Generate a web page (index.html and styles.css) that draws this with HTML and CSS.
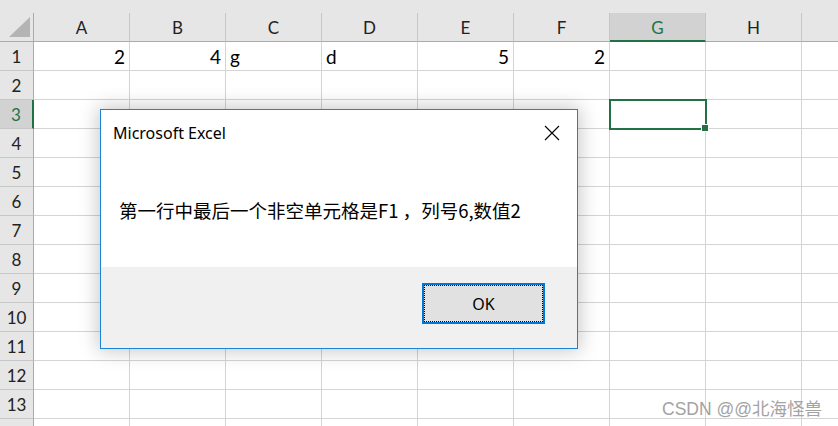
FILE: index.html
```html
<!DOCTYPE html>
<html lang="zh-CN">
<head>
<meta charset="utf-8">
<title>Excel</title>
<link rel="stylesheet" href="styles.css">
</head>
<body>
<div class="sheet">
  <div class="topstrip"></div>
  <div class="row hdr">
    <div class="corner"><svg width="34" height="28" viewBox="0 0 34 28"><polygon points="30,4 30,24 9,24" fill="#b4b4b4"/></svg></div>
    <div class="ch">A</div><div class="ch">B</div><div class="ch">C</div><div class="ch">D</div>
    <div class="ch">E</div><div class="ch">F</div><div class="ch sel">G</div><div class="ch">H</div><div class="ch last"></div>
  </div>
  <div class="row"><div class="rh">1</div><div class="c num">2</div><div class="c num">4</div><div class="c">g</div><div class="c">d</div><div class="c num">5</div><div class="c num">2</div><div class="c"></div><div class="c"></div><div class="c last"></div></div>
  <div class="row"><div class="rh">2</div><div class="c"></div><div class="c"></div><div class="c"></div><div class="c"></div><div class="c"></div><div class="c"></div><div class="c"></div><div class="c"></div><div class="c last"></div></div>
  <div class="row"><div class="rh sel">3</div><div class="c"></div><div class="c"></div><div class="c"></div><div class="c"></div><div class="c"></div><div class="c"></div><div class="c active"><span class="handle"></span></div><div class="c"></div><div class="c last"></div></div>
  <div class="row"><div class="rh">4</div><div class="c"></div><div class="c"></div><div class="c"></div><div class="c"></div><div class="c"></div><div class="c"></div><div class="c"></div><div class="c"></div><div class="c last"></div></div>
  <div class="row"><div class="rh">5</div><div class="c"></div><div class="c"></div><div class="c"></div><div class="c"></div><div class="c"></div><div class="c"></div><div class="c"></div><div class="c"></div><div class="c last"></div></div>
  <div class="row"><div class="rh">6</div><div class="c"></div><div class="c"></div><div class="c"></div><div class="c"></div><div class="c"></div><div class="c"></div><div class="c"></div><div class="c"></div><div class="c last"></div></div>
  <div class="row"><div class="rh">7</div><div class="c"></div><div class="c"></div><div class="c"></div><div class="c"></div><div class="c"></div><div class="c"></div><div class="c"></div><div class="c"></div><div class="c last"></div></div>
  <div class="row"><div class="rh">8</div><div class="c"></div><div class="c"></div><div class="c"></div><div class="c"></div><div class="c"></div><div class="c"></div><div class="c"></div><div class="c"></div><div class="c last"></div></div>
  <div class="row"><div class="rh">9</div><div class="c"></div><div class="c"></div><div class="c"></div><div class="c"></div><div class="c"></div><div class="c"></div><div class="c"></div><div class="c"></div><div class="c last"></div></div>
  <div class="row"><div class="rh">10</div><div class="c"></div><div class="c"></div><div class="c"></div><div class="c"></div><div class="c"></div><div class="c"></div><div class="c"></div><div class="c"></div><div class="c last"></div></div>
  <div class="row"><div class="rh">11</div><div class="c"></div><div class="c"></div><div class="c"></div><div class="c"></div><div class="c"></div><div class="c"></div><div class="c"></div><div class="c"></div><div class="c last"></div></div>
  <div class="row"><div class="rh">12</div><div class="c"></div><div class="c"></div><div class="c"></div><div class="c"></div><div class="c"></div><div class="c"></div><div class="c"></div><div class="c"></div><div class="c last"></div></div>
  <div class="row"><div class="rh">13</div><div class="c"></div><div class="c"></div><div class="c"></div><div class="c"></div><div class="c"></div><div class="c"></div><div class="c"></div><div class="c"></div><div class="c last"></div></div>
  <div class="row"><div class="rh"></div><div class="c"></div><div class="c"></div><div class="c"></div><div class="c"></div><div class="c"></div><div class="c"></div><div class="c"></div><div class="c"></div><div class="c last"></div></div>
</div>

<div class="dialog">
  <div class="dlg-title">
    <span class="dlg-caption">Microsoft Excel</span>
    <svg class="dlg-close" width="16" height="16" viewBox="0 0 16 16"><path d="M1 1 L15 15 M15 1 L1 15" stroke="#000" stroke-width="1.1" fill="none"/></svg>
  </div>
  <div class="dlg-body">第一行中最后一个非空单元格是F1 ，列号6,数值2</div>
  <div class="dlg-foot">
    <div class="btn"><span class="btn-focus">OK</span></div>
  </div>
</div>

<div class="watermark">CSDN @@北海怪兽</div>
</body>
</html>
```

FILE: styles.css
```css
html, body {
  margin: 0;
  padding: 0;
}
body {
  width: 838px;
  height: 426px;
  overflow: hidden;
  background: #ffffff;
  position: relative;
  font-family: Lato, "Noto Sans", sans-serif;
}
.sheet {
  display: flex;
  flex-direction: column;
  height: 426px;
  overflow: hidden;
}
.topstrip {
  height: 13px;
  flex: none;
  background: #e6e6e6;
}
.row {
  display: flex;
  flex: none;
  height: 29px;
}
.hdr {
  height: 29px;
  background: #e6e6e6;
}
.corner {
  width: 33px;
  border-right: 1px solid #ababab;
  border-bottom: 1px solid #ababab;
  flex: none;
  height: 28px;
}
.corner svg { display: block; }
.ch {
  width: 95px;
  flex: none;
  height: 28px;
  border-right: 1px solid #c6c6c6;
  border-bottom: 1px solid #ababab;
  text-align: center;
  font-size: 17px;
  line-height: 30px;
  color: #222;
}
.ch.sel {
  background: #d2d2d2;
  color: #217346;
  border-bottom: 2px solid #217346;
  height: 27px;
}
.ch.last {
  flex: 1;
  border-right: none;
}
.rh {
  width: 33px;
  flex: none;
  height: 28px;
  background: #e6e6e6;
  border-right: 1px solid #ababab;
  border-bottom: 1px solid #c6c6c6;
  text-align: center;
  font-size: 17px;
  line-height: 30px;
  color: #222;
}
.rh.sel {
  background: #d2d2d2;
  color: #217346;
  width: 32px;
  border-right: 2px solid #217346;
}
.c {
  flex: none;
  height: 28px;
  border-right: 1px solid #d4d4d4;
  border-bottom: 1px solid #d4d4d4;
  font-size: 19px;
  line-height: 30px;
  padding: 0 4px;
  box-sizing: content-box;
  width: 87px;
  color: #000;
  position: relative;
}
.c.num { text-align: right; }
.c.last { flex: 1; border-right: none; }
.c.active {
  outline: 2px solid #217346;
  outline-offset: -1px;
  z-index: 1;
}
.handle {
  position: absolute;
  right: -4px;
  bottom: -4px;
  width: 6px;
  height: 6px;
  background: #217346;
  border: 1px solid #fff;
}

.dialog {
  position: absolute;
  left: 100px;
  top: 109px;
  width: 476px;
  height: 238px;
  border: 1px solid #1883d7;
  background: #ffffff;
  box-shadow: 0 0 18px 2px rgba(0, 0, 0, 0.22);
  display: flex;
  flex-direction: column;
  font-family: "Noto Sans", "Noto Sans CJK SC", sans-serif;
  z-index: 5;
}
.dlg-title {
  height: 46px;
  display: flex;
  align-items: center;
  justify-content: space-between;
  padding: 0 17px 0 12px;
  flex: none;
}
.dlg-caption {
  font-size: 16px;
  color: #000;
}
.dlg-close { display: block; }
.dlg-body {
  flex: 1;
  display: flex;
  align-items: center;
  padding: 0 0 4px 18px;
  font-family: "Noto Sans CJK SC", sans-serif;
  font-size: 18.5px;
  color: #000;
}
.dlg-foot {
  height: 81px;
  flex: none;
  background: #f0f0f0;
  display: flex;
  justify-content: flex-end;
  align-items: flex-start;
  padding: 16px 32px 0 0;
  box-sizing: border-box;
}
.btn {
  width: 119px;
  height: 37px;
  border: 2px solid #0078d7;
  background: #e1e1e1;
  display: flex;
}
.btn-focus {
  flex: 1;
  border: 1px dotted #000;
  display: flex;
  align-items: center;
  justify-content: center;
  font-size: 16px;
  color: #000;
}
.watermark {
  position: absolute;
  right: 16px;
  top: 395px;
  font-family: "Liberation Sans", "Noto Sans CJK SC", sans-serif;
  font-size: 17.5px;
  color: #a3a3a3;
  z-index: 6;
}
```
